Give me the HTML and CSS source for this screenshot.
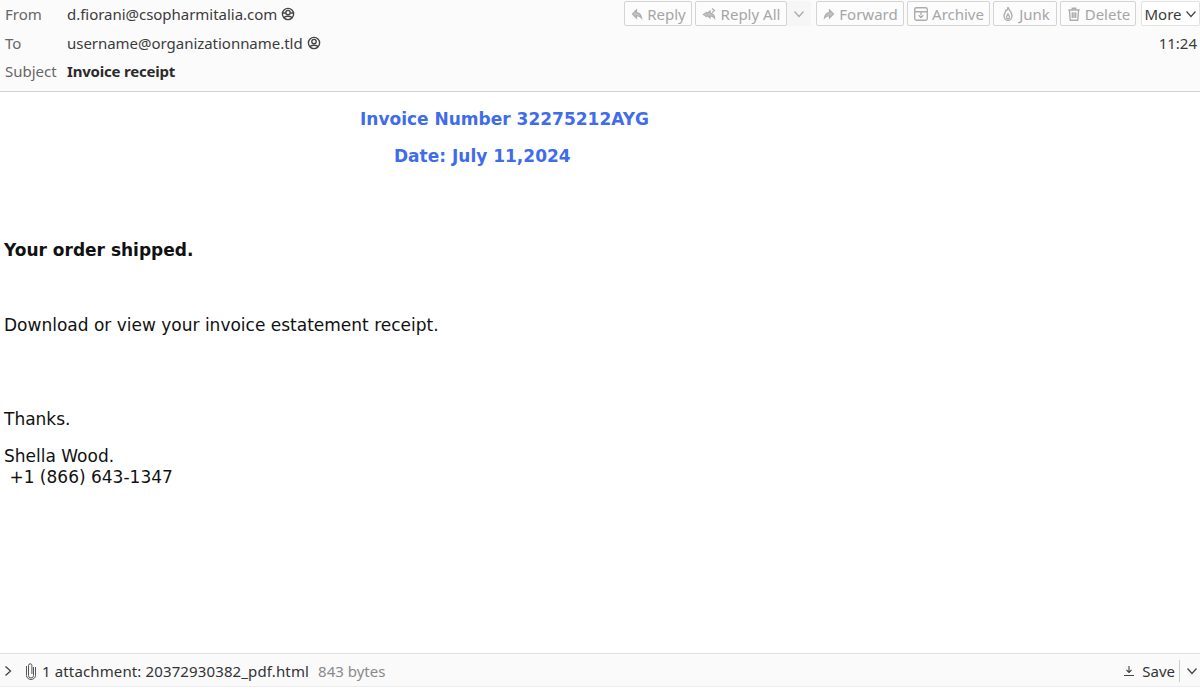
FILE: index.html
```html
<!DOCTYPE html>
<html lang="en">
<head>
<meta charset="utf-8">
<title>Invoice receipt</title>
<link rel="stylesheet" href="styles.css">
</head>
<body>
<div class="app">
  <header class="head">
    <div class="row row-from">
      <span class="label">From</span>
      <span class="addr">d.fiorani@csopharmitalia.com</span>
      <svg class="person" viewBox="0 0 14 14"><circle cx="7" cy="7" r="5.6"/><circle cx="7" cy="5.6" r="2.2"/><path d="M3 11c1-2.4 7-2.4 8 0M2 6h2.6M9.4 6H12"/></svg>
      <div class="tools">
        <span class="btn b-reply"><svg viewBox="0 0 14 14"><path class="solid" d="M6.5 3 2.5 7l4 4V8.600c2 0 3.600.6 5 2.400-.4-3-2-5-5-5.400z"/></svg>Reply</span>
        <span class="btn b-all"><svg class="wide" viewBox="0 0 16 14"><path class="solid" d="M8 4 4 7.500l4 3.500V9c2 0 3.400.6 4.600 2-.2-2.800-1.800-4.400-4.600-4.800z"/><path d="M10 1.500l2.500 2-2.500 2M5 5 1.500 7.500 5 10"/></svg>Reply All</span>
        <span class="btn-drop"><svg class="chev" viewBox="0 0 12 12"><path d="M1.500 3.500 6 8.500l4.500-5"/></svg></span>
        <span class="btn b-fwd"><svg viewBox="0 0 14 14"><path class="solid" d="M7.500 3l4 4-4 4V8.600c-2 0-3.600.6-5 2.400.4-3 2-5 5-5.400z"/></svg>Forward</span>
        <span class="btn b-arch"><svg class="large" viewBox="0 0 14 14"><rect x="1.500" y="1.500" width="11" height="11" rx="1.500"/><path d="M1.500 5h11M7 5v3M5 8l2 2 2-2"/></svg>Archive</span>
        <span class="btn b-junk"><svg class="large" viewBox="0 0 14 14"><path d="M7 1c.5 2.500 3.500 4 3.500 7.500a3.500 4 0 0 1-7 0C3.500 6.500 5 6 5 4c1 .4 1.800-1 2-3z"/><path d="M7 7c.4 1 1.300 1.600 1.300 2.800a1.300 1.500 0 0 1-2.600 0C5.700 8.800 6.600 8 7 7z"/></svg>Junk</span>
        <span class="btn b-del"><svg class="large" viewBox="0 0 14 14"><path d="M2 3.500h10M5.500 3.500V2h3v1.500M3 3.500l.7 9h6.600l.7-9M5.500 5.500v5M7 5.500v5M8.500 5.500v5"/></svg>Delete</span>
        <span class="btn b-more">More<svg class="chev" viewBox="0 0 12 12"><path d="M1.500 3.500 6 8.500l4.500-5"/></svg></span>
      </div>
    </div>
    <div class="row row-to">
      <span class="label">To</span>
      <span class="addr">username@organizationname.tld</span>
      <svg class="person" viewBox="0 0 14 14"><circle cx="7" cy="7" r="5.6"/><circle cx="7" cy="5.600" r="2.200"/><path d="M3 11c1-2.400 7-2.400 8 0"/></svg>
      <span class="time">11:24</span>
    </div>
    <div class="row row-subj">
      <span class="label">Subject</span>
      <span class="subject">Invoice receipt</span>
    </div>
  </header>
  <main class="mail">
    <div class="title title-1">Invoice Number 32275212AYG</div>
    <div class="title title-2">Date: July 11,2024</div>
    <p class="shipped">Your order shipped.</p>
    <p class="download">Download or view your invoice estatement receipt.</p>
    <p class="thanks">Thanks.</p>
    <p class="sign">Shella Wood.<br>&nbsp;+1 (866) 643-1347</p>
  </main>
  <footer class="attach">
    <svg class="expand" viewBox="0 0 12 12"><path d="M3.500 1.500 8.500 6l-5 4.500"/></svg>
    <svg class="clip" viewBox="0 0 12 18"><path d="M8.500 5v8.500a2.500 2.500 0 0 1-5 0V3.500a1.700 1.700 0 0 1 3.400 0V12"/><path d="M10.500 5v8.500a4.500 4 0 0 1-9 0V4"/></svg>
    <span class="att-name">1 attachment: 20372930382_pdf.html</span>
    <span class="att-size">843 bytes</span>
    <span class="save"><svg viewBox="0 0 12 12"><path d="M6 1v6M3.500 5 6 7.500 8.500 5M1 10.500h10"/></svg>Save</span>
    <span class="sep"></span>
    <svg class="chev chev-save" viewBox="0 0 12 12"><path d="M1.500 3.500 6 8.500l4.500-5"/></svg>
  </footer>
</div>
</body>
</html>
```
FILE: styles.css
```css
* { box-sizing: border-box; }
html, body { margin: 0; padding: 0; background: #fff; }
.app {
  width: 1200px;
  height: 693px;
  display: flex;
  flex-direction: column;
  overflow: hidden;
  font-family: "Noto Sans", "Open Sans", sans-serif;
  color: #2a2a2a;
}
.head {
  height: 92px;
  flex: none;
  background: #fbfbfb;
  border-bottom: 1px solid #d2d2d2;
  padding: 0 0 0 5px;
  font-size: 15px;
}
.row { display: flex; align-items: center; }
.row-from { height: 27px; }
.row-to { height: 32px; }
.row-subj { height: 23px; }
.label { width: 62px; color: #666; }
.addr { color: #3c3c3c; letter-spacing: -0.03px; }
.subject { font-weight: 700; color: #2b2b2b; letter-spacing: -0.2px; }
.person {
  width: 14px; height: 14px; margin-left: 4px;
  fill: none; stroke: #444; stroke-width: 1.400;
}
.tools {
  margin-left: auto;
  display: flex;
  align-items: center;
  gap: 3px;
  color: #a6a6a6;
}
.btn {
  height: 25px;
  display: flex;
  align-items: center;
  justify-content: center;
  gap: 3px;
  border: 1px solid #d4d4d4;
  border-radius: 2px;
  background: #fcfcfc;
  white-space: nowrap;
}
.btn svg {
  width: 14px; height: 14px; flex: none;
  fill: none; stroke: #adadad; stroke-width: 1.200;
}
.btn svg.wide { width: 16px; }
.btn svg.large { width: 16px; height: 16px; }
.btn svg .solid { fill: #c4c4c4; }
.btn-drop {
  width: 24px; height: 25px;
  margin-left: -3px;
  display: flex; align-items: center; justify-content: center;
  background: #f6f6f6;
}
.chev { width: 12px; height: 12px; fill: none; stroke: #a8a8a8; stroke-width: 1.200; }
.b-reply { width: 68px; }
.b-all { width: 92px; }
.b-fwd { width: 88px; margin-left: 2px; }
.b-arch { width: 83px; }
.b-junk { width: 64px; }
.b-del { width: 76px; }
.b-more {
  width: 59px; color: #3a3a3a; background: #fff; border-color: #e2e2e2;
  margin-left: 2px;
}
.b-more .chev { stroke: #444; width: 12px; height: 12px; }
.time { margin-left: auto; margin-right: 3px; color: #3c3c3c; }
.mail {
  flex: 1;
  background: #fff;
  font-family: "DejaVu Sans", sans-serif;
  font-size: 17px;
  line-height: 19px;
  color: #111;
  padding: 18px 0 0 4px;
}
.mail p { margin: 0; }
.title { color: #3f6cea; font-weight: 700; }
.title-1 { padding-left: 356px; }
.title-2 { padding-left: 390px; margin-top: 18px; }
.mail .shipped { font-weight: 700; margin-top: 75px; }
.mail .download { margin-top: 56px; }
.mail .thanks { margin-top: 75px; }
.mail .sign { margin-top: 17px; line-height: 21px; }
.attach {
  height: 34px;
  flex: none;
  margin-bottom: 6px;
  padding-top: 1px;
  display: flex;
  align-items: center;
  background: #fafafa;
  border-top: 1px solid #e0e0e0;
  border-bottom: 1px solid #ededed;
  font-size: 15px;
  color: #333;
}
.expand { width: 12px; height: 12px; margin-left: 2px; fill: none; stroke: #444; stroke-width: 1.300; }
.clip { width: 12px; height: 18px; margin-left: 11px; fill: none; stroke: #555; stroke-width: 1; }
.att-name { margin-left: 5px; letter-spacing: 0.13px; }
.att-size { margin-left: 9px; color: #8a8a8a; }
.save { margin-left: auto; display: flex; align-items: center; gap: 7px; color: #333; }
.save svg { width: 12px; height: 12px; fill: none; stroke: #444; stroke-width: 1.100; }
.sep { width: 1px; height: 22px; background: #ccc; margin: 0 6px 0 4px; }
.chev-save { stroke: #444; margin-right: 2px; }
```
